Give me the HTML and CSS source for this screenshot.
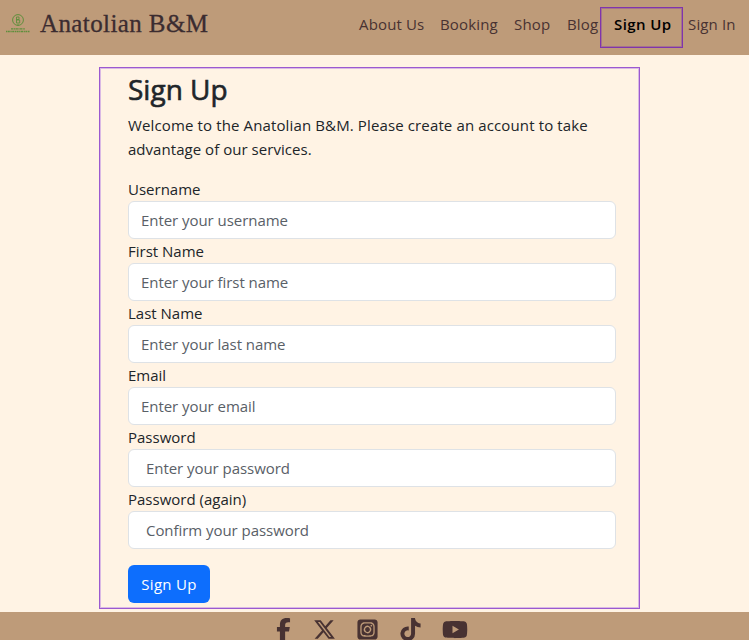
FILE: index.html
```html
<!DOCTYPE html>
<html lang="en">
<head>
<meta charset="utf-8">
<title>Sign Up</title>
<link rel="stylesheet" href="styles.css">
</head>
<body>
<header class="navbar">
  <a class="brand">
    <svg class="logo" viewBox="0 0 26 22">
      <g fill="none" stroke="#5f8f3c">
        <circle cx="13" cy="7" r="5.4" stroke-width="1"/>
        <path d="M11.5 4v6M11.5 4h2.5v2.500h-2.500M11.5 7h3.200v3h-3.200M13 11v2" stroke-width=".9"/>
        <path d="M6 15.900h14" stroke-width="1.300" stroke-dasharray="2.500 .5 1 .4"/>
        <path d="M1 18.500h24" stroke-width="1.700" stroke-dasharray="1.300 .5 2 .6"/>
      </g>
    </svg>
    <span class="brand-name">Anatolian B&amp;M</span>
  </a>
  <nav class="links">
    <a>About Us</a><a>Booking</a><a>Shop</a><a>Blog</a><a class="active">Sign Up</a><a>Sign In</a>
  </nav>
</header>
<main class="panel">
  <h1>Sign Up</h1>
  <p class="intro">Welcome to the Anatolian B&amp;M. Please create an account to take<br><span class="line2">advantage of our services.</span></p>
  <form>
    <label for="u">Username</label><input id="u" type="text" placeholder="Enter your username">
    <label for="f">First Name</label><input id="f" type="text" placeholder="Enter your first name">
    <label for="l">Last Name</label><input id="l" type="text" placeholder="Enter your last name">
    <label for="e">Email</label><input id="e" type="email" placeholder="Enter your email">
    <label for="p">Password</label><input id="p" class="secret" type="password" placeholder="Enter your password">
    <label for="q">Password (again)</label><input id="q" class="secret" type="password" placeholder="Confirm your password">
    <button type="button">Sign Up</button>
  </form>
</main>
<footer class="footer">
  <svg class="fb" viewBox="0 0 320 512"><path d="M80 299.3V512H196V299.3h86.500l18-97.800H196V166.900c0-51.700 20.300-71.500 72.700-71.500c16.300 0 29.400 .4 37 1.200V7.900C291.400 4 256.400 0 236.200 0C129.300 0 80 50.500 80 159.400v42.100H14v97.800H80z"/></svg>
  <svg class="x" viewBox="0 0 512 512"><path d="M389.200 48h70.600L305.600 224.200 487 464H345L233.700 318.600 106.500 464H35.800L200.700 275.500 26.800 48H172.400L272.900 180.900 389.200 48zM364.400 421.800h39.100L151.100 88h-42L364.400 421.800z"/></svg>
  <svg class="ig" viewBox="0 0 448 512"><path d="M194.400 211.700a53.300 53.300 0 1 0 59.300 88.700 53.300 53.300 0 1 0-59.300-88.700zm142.300-68.400c-5.200-5.200-11.500-9.300-18.400-12-18.100-7.100-57.600-6.800-83.100-6.500-4.100 0-7.900.1-11.200.1s-7.200 0-11.400-.1c-25.500-.3-64.800-.7-82.900 6.500-6.900 2.700-13.100 6.800-18.400 12s-9.300 11.500-12 18.400c-7.100 18.100-6.700 57.700-6.500 83.200 0 4.100.1 7.900.1 11.100s0 7-.1 11.100c-.2 25.500-.6 65.100 6.500 83.200 2.700 6.900 6.800 13.100 12 18.400s11.500 9.300 18.400 12c18.100 7.100 57.600 6.800 83.100 6.500 4.100 0 7.900-.1 11.200-.1s7.200 0 11.400.1c25.500.3 64.800.7 82.900-6.500 6.900-2.700 13.100-6.800 18.400-12s9.300-11.500 12-18.400c7.200-18 6.800-57.400 6.500-83 0-4.200-.1-8.100-.1-11.400s0-7.100.1-11.400c.3-25.500.7-64.900-6.500-83-2.700-6.900-6.800-13.100-12-18.400zm-67.100 44.500a82 82 0 1 1-91.100 136.400 82 82 0 1 1 91.100-136.400zm29.200-1.300a19.100 19.100 0 1 1 21.200-31.900 19.100 19.100 0 1 1-21.200 31.900zM448 96c0-35.300-28.700-64-64-64H64C28.700 32 0 60.700 0 96v320c0 35.300 28.700 64 64 64h320c35.300 0 64-28.700 64-64V96zM357 389c-18.700 18.700-41.400 24.600-67 25.900-26.400 1.500-105.600 1.500-132 0-25.600-1.300-48.300-7.200-67-25.900s-24.600-41.400-25.800-67c-1.500-26.400-1.500-105.600 0-132 1.300-25.600 7.100-48.300 25.800-67s41.500-24.600 67-25.800c26.400-1.500 105.600-1.500 132 0 25.600 1.300 48.300 7.100 67 25.800s24.600 41.400 25.800 67c1.500 26.300 1.500 105.400 0 131.900-1.300 25.600-7.100 48.300-25.800 67z"/></svg>
  <svg class="tt" viewBox="0 0 448 512"><path d="M448 209.900a210.100 210.100 0 0 1-122.800-39.300V349.400A162.600 162.600 0 1 1 185 188.300V278.200a74.600 74.600 0 1 0 52.200 71.200V0h88a121.200 121.200 0 0 0 1.900 22.200A122.200 122.200 0 0 0 381 102.400a121.400 121.400 0 0 0 67 20.100z"/></svg>
  <svg class="yt" viewBox="0 0 576 512"><path d="M549.700 124.100c-6.300-23.700-24.800-42.300-48.300-48.600C458.800 64 288 64 288 64S117.200 64 74.600 75.500c-23.500 6.300-42 24.900-48.300 48.600C14.900 167 14.900 256.400 14.900 256.400s0 89.400 11.400 132.300c6.300 23.700 24.800 41.500 48.300 47.800C117.200 448 288 448 288 448s170.800 0 213.400-11.500c23.500-6.300 42-24.200 48.300-47.800 11.400-42.900 11.400-132.300 11.400-132.300s0-89.400-11.400-132.300zM232.200 337.600V175.200l142.700 81.200-142.700 81.200z"/></svg>
</footer>
</body>
</html>
```
FILE: styles.css
```css
*, *::after { box-sizing: border-box; }
html, body { height: 100%; }
body {
  margin: 0;
  overflow: hidden;
  display: flex;
  flex-direction: column;
  background: #fff3e4;
  color: #212529;
  font: 400 15px/24px "Open Sans", "Noto Sans", sans-serif;
}
.navbar {
  flex: none;
  height: 55px;
  display: flex;
  justify-content: space-between;
  align-items: flex-start;
  padding: 0 13px 0 5px;
  background: #be9b79;
  color: #483232;
}
.brand { display: flex; }
.logo { width: 26px; height: 22px; margin-top: 13px; }
.brand-name {
  margin: 8px 0 0 9px;
  font: 400 25px/32px "Liberation Serif", serif;
  letter-spacing: .4px;
  color: #3b2c30;
  -webkit-text-stroke: .3px #3b2c30;
}
.links {
  display: grid;
  grid-template-columns: 65px 58px 37px 31px 58px 48px;
  column-gap: 16px;
  margin-top: 12px;
  white-space: nowrap;
  letter-spacing: .15px;
}
.active {
  position: relative;
  color: #000;
  font-weight: 600;
  letter-spacing: .4px;
}
.active::after {
  content: "";
  position: absolute;
  left: -14px;
  top: -5px;
  width: 83px;
  height: 41px;
  border: 1px solid #7f34ad;
  box-shadow: inset 0 0 0 1px rgba(127, 52, 173, .4);
}
.panel {
  flex: none;
  width: 541px;
  height: 542px;
  margin: 12px 0 3px 99px;
  padding: 4px 23px 0 28px;
  border: 1px solid #9b59d0;
  box-shadow: inset 0 0 0 1px #dab9e4;
}
h1 {
  margin: 0 0 7px;
  font-size: 28px;
  line-height: 34px;
  font-weight: 400;
  -webkit-text-stroke: .6px #212529;
}
.intro { margin: 0 0 16px; white-space: nowrap; letter-spacing: .13px; }
.line2 { letter-spacing: .04px; }
form { display: flex; flex-direction: column; }
label { height: 24px; }
input {
  width: 488px;
  height: 38px;
  padding: 6px 12px;
  border: 1px solid #dee2e6;
  border-radius: 6px;
  background: #fff;
  color: #212529;
  font: inherit;
  letter-spacing: -.05px;
}
.secret { padding-left: 17px; }
input::placeholder { color: #596067; opacity: 1; }
button {
  width: 82px;
  height: 38px;
  margin-top: 16px;
  padding: 0;
  border: 0;
  border-radius: 6px;
  background: #0d6efd;
  color: #fff;
  font: inherit;
  letter-spacing: .3px;
}
.footer {
  flex: none;
  height: 40px;
  display: flex;
  align-items: flex-start;
  padding: 6px 0 0 276px;
  background: #be9b79;
}
.footer svg { flex: none; height: 23px; fill: #483232; }
.fb { width: 15px; }
.x { width: 23px; margin-left: 22px; }
.ig { width: 21px; margin-left: 21px; }
.tt { width: 21px; margin-left: 22px; }
.yt { width: 26px; margin-left: 21px; }
```
